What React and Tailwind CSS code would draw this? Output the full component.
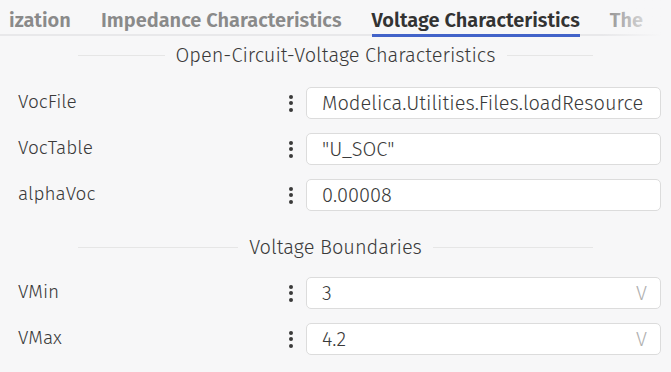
import React from "react";

function Dots() {
  return (
    <div className="flex w-[16px] flex-col items-center justify-center gap-[2.5px]">
      <span className="h-[4px] w-[4px] rounded-full bg-[#3a3a3a]" />
      <span className="h-[4px] w-[4px] rounded-full bg-[#3a3a3a]" />
      <span className="h-[4px] w-[4px] rounded-full bg-[#3a3a3a]" />
    </div>
  );
}

function Row({ label, value, unit }) {
  return (
    <div className="flex h-[32px] items-center pl-[18px] pr-[10px]">
      <div className="flex-1 text-[19px] font-light leading-none text-[#3a3a3a] -mt-[3px]">{label}</div>
      <Dots />
      <div className="ml-[7px] flex h-[32px] w-[355px] items-center rounded-[5px] border border-[#dcdcdc] bg-white pl-[15px] pr-[13px]">
        <span className="flex-1 text-[20px] font-light leading-none text-[#3a3a3a]">{value}</span>
        {unit && <span className="text-[20px] font-light leading-none text-[#b0b0b0]">{unit}</span>}
      </div>
    </div>
  );
}

function Header({ children }) {
  return (
    <div className="mx-[78px] flex items-center gap-[11px]">
      <div className="h-px flex-1 bg-[#e6e6e6]" />
      <div className="text-[20px] font-light leading-none text-[#3a3a3a]">{children}</div>
      <div className="h-px flex-1 bg-[#e6e6e6]" />
    </div>
  );
}

export default function App() {
  return (
    <div
      className="h-[372px] w-[671px] overflow-hidden bg-[#f7f7f8]"
      style={{ fontFamily: "'Fira Sans', Roboto, 'Noto Sans', sans-serif" }}
    >
      <div className="relative h-[37px] w-[662px] overflow-hidden">
        <div className="absolute bottom-[1px] left-0 right-0 h-[2px] bg-[#e8e8ea]" />
        <div className="flex h-[37px] gap-[30px] pl-[9px] text-[20px] font-semibold whitespace-nowrap">
          <div className="relative flex items-center pt-[2px] text-[#8a8a8a]">ization</div>
          <div className="relative flex items-center pt-[2px] text-[#8a8a8a]">Impedance Characteristics</div>
          <div className="relative flex items-center pt-[2px] text-[#333]">
            Voltage Characteristics
            <span className="absolute bottom-0 left-0 right-0 h-[3px] bg-[#4263c9]" />
          </div>
          <div className="relative flex items-center pt-[2px] text-[#8a8a8a]">The</div>
        </div>
        <div className="absolute right-0 top-0 h-[37px] w-[60px] bg-gradient-to-r from-[#f7f7f8]/0 to-[#f7f7f8]" />
      </div>

      <div className="mt-[8px]">
        <Header>Open-Circuit-Voltage Characteristics</Header>
      </div>
      <div className="mt-[22px] flex flex-col gap-[14px]">
        <Row label="VocFile" value="Modelica.Utilities.Files.loadResource" />
        <Row label="VocTable" value={'"U_SOC"'} />
        <Row label="alphaVoc" value="0.00008" />
      </div>
      <div className="mt-[26px]">
        <Header>Voltage Boundaries</Header>
      </div>
      <div className="mt-[20px] flex flex-col gap-[14px]">
        <Row label="VMin" value="3" unit="V" />
        <Row label="VMax" value="4.2" unit="V" />
      </div>
    </div>
  );
}
